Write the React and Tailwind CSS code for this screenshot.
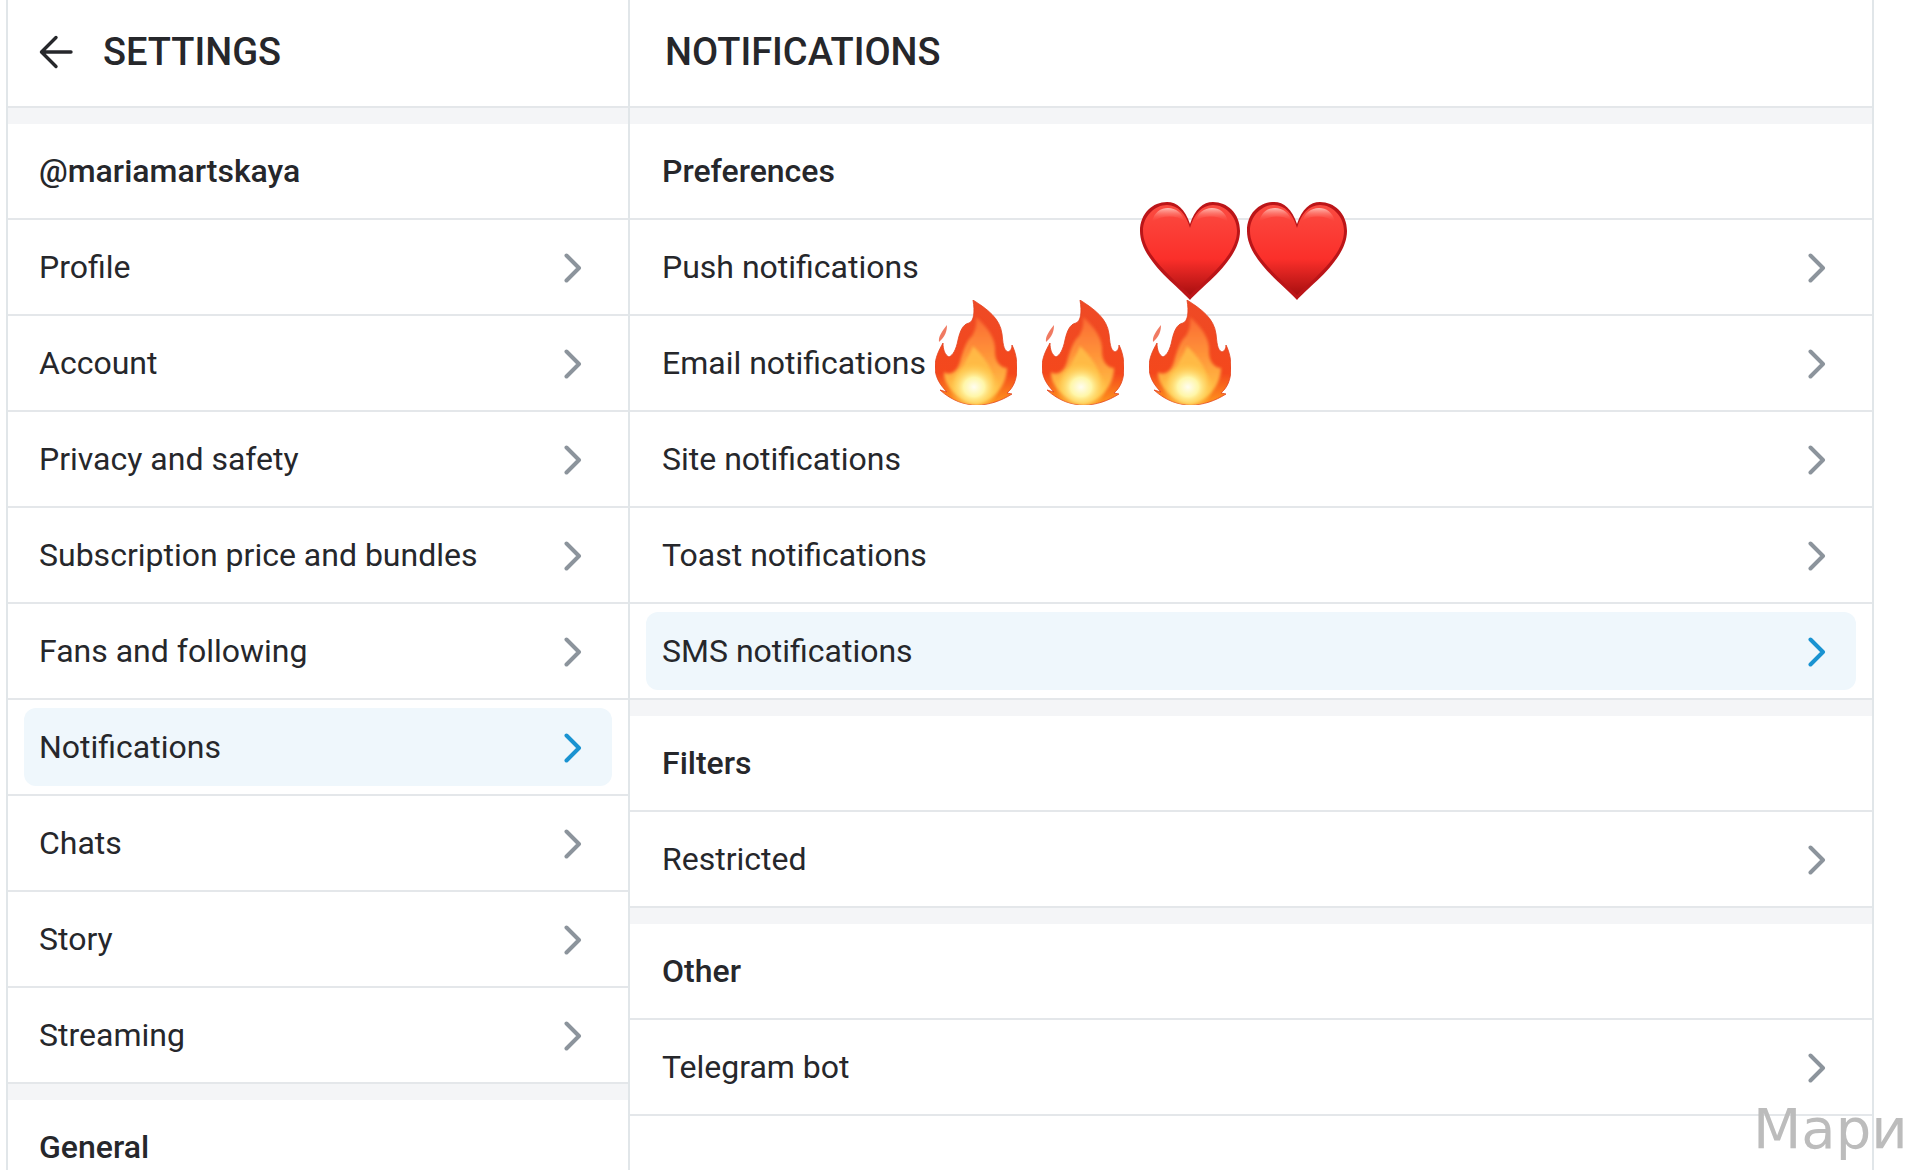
import React, { useId } from "react";

function Chevron({ active }) {
  return (
    <svg width="18" height="30" viewBox="0 0 18 30" fill="none" className="shrink-0 mt-[2px]">
      <path d="M2.5 2.5 L15 15 L2.5 27.5" stroke={active ? "#1a93d1" : "#8c949c"} strokeWidth="4" strokeLinecap="round" strokeLinejoin="round" />
    </svg>
  );
}

function Row({ label, active, right }) {
  if (active) {
    return (
      <div className="h-24 border-b-2 border-[#e4e7ea] pt-2 pb-2 px-4">
        <div className={`h-full rounded-xl bg-[#eff7fc] flex items-center justify-between pr-[30px] ${right ? "pl-4" : "pl-[15px]"}`}>
          <span>{label}</span>
          <Chevron active />
        </div>
      </div>
    );
  }
  return (
    <div className={`h-24 border-b-2 border-[#e4e7ea] flex items-center justify-between pr-[46px] ${right ? "pl-8" : "pl-[31px]"}`}>
      <span>{label}</span>
      <Chevron />
    </div>
  );
}

function Head({ label, right }) {
  return (
    <div className={`h-24 border-b-2 border-[#e4e7ea] flex items-center font-medium ${right ? "pl-8" : "pl-[31px]"}`}>
      {label}
    </div>
  );
}

function Gap() {
  return <div className="h-4 bg-[#f4f5f7]" />;
}

function Heart({ className }) {
  const id = useId();
  return (
    <svg viewBox="0 0 100 98" className={className}>
      <defs>
        <linearGradient id={id + "a"} x1="0" y1="0" x2="0" y2="1">
          <stop offset="0" stopColor="#fb4b41" />
          <stop offset="0.6" stopColor="#fb2f2a" />
          <stop offset="1" stopColor="#a90f10" />
        </linearGradient>
        <linearGradient id={id + "b"} x1="0" y1="0" x2="0" y2="1">
          <stop offset="0" stopColor="#ffc4ba" stopOpacity="0.95" />
          <stop offset="1" stopColor="#ff4a40" stopOpacity="0" />
        </linearGradient>
      </defs>
      <path d="M50 98 C38 84 0 58 0 29 C0 11 13 0 27 0 C37 0 45 7 50 22 C55 7 63 0 73 0 C87 0 100 11 100 29 C100 58 62 84 50 98Z" fill="#bb1518" />
      <path d="M50 93 C38 80 3 55 3 29 C3 14 15 3 27 3 C38 3 46 12 50 26 C54 12 62 3 73 3 C85 3 97 14 97 29 C97 55 62 80 50 93Z" fill={`url(#${id}a)`} />
      <path d="M12 20 C14 10 21 6 28 6 C36 6 42 11 45 19 C36 13 22 13 12 20Z" fill={`url(#${id}b)`} />
      <path d="M88 20 C86 10 79 6 72 6 C64 6 58 11 55 19 C64 13 78 13 88 20Z" fill={`url(#${id}b)`} />
    </svg>
  );
}

function Flame({ className }) {
  const id = useId();
  const outer = "M38 0 C52 9 65 18 67 34 C68 42 68 50 73 52 C76 51 77 48 77 45 C81 53 82 61 82 68 C82 80 78 88 72 93 L77 94 C66 101 54 105 42 105 C30 105 17 101 5 90 L12 92 C4 84 0 76 0 67 C0 58 4 50 8 43 C8 50 10 55 14 57 C18 55 21 50 23 40 C25 31 28 24 34 23 C39 21 40 12 38 0Z";
  return (
    <svg viewBox="0 0 82 105" className={className}>
      <defs>
        <linearGradient id={id + "o"} x1="0" y1="0" x2="0" y2="1">
          <stop offset="0" stopColor="#ee4a26" />
          <stop offset="0.7" stopColor="#f4481c" />
          <stop offset="1" stopColor="#ff9a1c" />
        </linearGradient>
        <linearGradient id={id + "m"} x1="0" y1="0" x2="0" y2="1">
          <stop offset="0" stopColor="#fb6a33" />
          <stop offset="0.5" stopColor="#ff9a3a" />
          <stop offset="1" stopColor="#ffd04a" />
        </linearGradient>
        <radialGradient id={id + "c"} cx="0.5" cy="0.5" r="0.5">
          <stop offset="0" stopColor="#fffdf0" />
          <stop offset="0.4" stopColor="#fff6a8" />
          <stop offset="1" stopColor="#ffd04a" stopOpacity="0" />
        </radialGradient>
        <clipPath id={id + "k"}>
          <path d={outer} />
        </clipPath>
        <filter id={id + "f"} x="-20%" y="-20%" width="140%" height="140%">
          <feGaussianBlur stdDeviation="1.6" />
        </filter>
      </defs>
      <path d="M4 42 C3 37 7 31 12 25 C12 31 10 37 4 42Z" fill="#f07a62" />
      <path d={outer} fill={`url(#${id}o)`} stroke="#e2431f" strokeWidth="0.8" />
      <g clipPath={`url(#${id}k)`}>
        <path d="M41 17 C52 27 61 38 60 52 C60 62 66 68 72 68 C72 82 62 100 42 104 C24 101 8 86 9 72 C15 76 22 72 25 62 C28 50 32 40 37 36 C40 31 42 25 41 17Z" fill={`url(#${id}m)`} filter={`url(#${id}f)`} />
        <path d="M38 46 C48 56 58 68 58 80 C58 94 50 102 39 103 C28 102 18 92 19 82 C20 74 27 70 30 62 C33 56 36 52 38 46Z" fill="#ffc24a" opacity="0.8" filter={`url(#${id}f)`} />
        <ellipse cx="39" cy="87" rx="26" ry="24" fill={`url(#${id}c)`} />
      </g>
    </svg>
  );
}

const left = ["Profile", "Account", "Privacy and safety", "Subscription price and bundles", "Fans and following", "Notifications", "Chats", "Story", "Streaming"];
const right = ["Push notifications", "Email notifications", "Site notifications", "Toast notifications", "SMS notifications"];

export default function App() {
  return (
    <div className="relative h-[1170px] overflow-hidden bg-white text-[#26272b] text-[32px] font-['Roboto',sans-serif] flex pl-[6px]">
      <div className="w-[624px] border-x-2 border-[#e1e6e9] shrink-0">
        <div className="h-[108px] border-b-2 border-[#e4e7ea] flex items-center pl-[31px] gap-[30px] pb-[2px]">
          <svg width="34" height="34" viewBox="0 0 34 34" fill="none" className="shrink-0">
            <path d="M32 17 H3 M17 2.5 L2.5 17 L17 31.5" stroke="#26272b" strokeWidth="3.4" strokeLinecap="round" strokeLinejoin="round" />
          </svg>
          <span className="text-[38px] font-medium uppercase">Settings</span>
        </div>
        <Gap />
        <Head label="@mariamartskaya" />
        {left.map((l) => (
          <Row key={l} label={l} active={l === "Notifications"} />
        ))}
        <Gap />
        <Head label="General" />
      </div>
      <div className="w-[1244px] border-r-2 border-[#e1e6e9] shrink-0">
        <div className="h-[108px] border-b-2 border-[#e4e7ea] flex items-center pl-[35px] pb-[2px]">
          <span className="text-[38px] font-medium uppercase">Notifications</span>
        </div>
        <Gap />
        <Head right label="Preferences" />
        {right.map((l) => (
          <Row right key={l} label={l} active={l === "SMS notifications"} />
        ))}
        <Gap />
        <Head right label="Filters" />
        <Row right label="Restricted" />
        <Gap />
        <Head right label="Other" />
        <Row right label="Telegram bot" />
      </div>
      <Heart className="absolute left-[1140px] top-[202px] w-[100px] h-[98px]" />
      <Heart className="absolute left-[1247px] top-[202px] w-[100px] h-[98px]" />
      <Flame className="absolute left-[935px] top-[300px] w-[82px] h-[105px]" />
      <Flame className="absolute left-[1042px] top-[300px] w-[82px] h-[105px]" />
      <Flame className="absolute left-[1149px] top-[300px] w-[82px] h-[105px]" />
      <div className="absolute left-[1753px] top-[1129px] -translate-y-1/2 text-[56px] leading-none text-[#bcbcbc] font-['DejaVu_Sans',sans-serif] whitespace-nowrap">Мари</div>
    </div>
  );
}
